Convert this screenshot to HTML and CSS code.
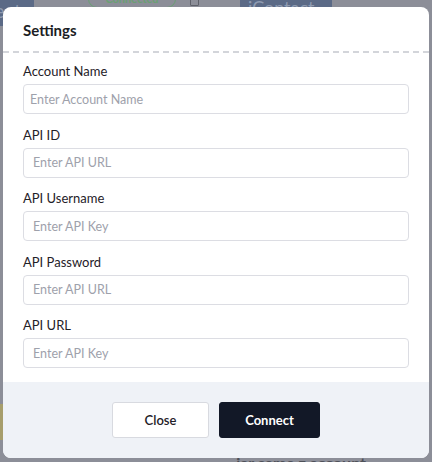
FILE: index.html
```html
<!DOCTYPE html>
<html>
<head>
<meta charset="utf-8">
<link rel="stylesheet" href="styles.css">
</head>
<body>
<div class="page">
  <div class="page-top">
    <div class="chip-blue left-chip">ect</div>
    <div class="pill">Connected</div>
    <div class="trash"></div>
    <div class="chip-blue contact-chip">iContact</div>
  </div>
  <div class="page-bottom">
    <div class="side-yellow"></div>
    <div class="bottom-text">jar sama z account</div>
  </div>
</div>

<div class="modal">
  <div class="modal-header">Settings</div>
  <div class="modal-body">
    <div class="field">
      <label class="label">Account Name</label>
      <input class="input input-tight" type="text" placeholder="Enter Account Name">
    </div>
    <div class="field">
      <label class="label">API ID</label>
      <input class="input" type="text" placeholder="Enter API URL">
    </div>
    <div class="field">
      <label class="label">API Username</label>
      <input class="input" type="text" placeholder="Enter API Key">
    </div>
    <div class="field">
      <label class="label">API Password</label>
      <input class="input" type="text" placeholder="Enter API URL">
    </div>
    <div class="field">
      <label class="label">API URL</label>
      <input class="input" type="text" placeholder="Enter API Key">
    </div>
  </div>
  <div class="modal-footer">
    <button class="btn btn-close">Close</button>
    <button class="btn btn-connect">Connect</button>
  </div>
</div>
</body>
</html>
```

FILE: styles.css
```css
html, body {
  margin: 0;
  padding: 0;
}
body {
  width: 432px;
  height: 462px;
  overflow: hidden;
  background: #8c8e98;
  font-family: Lato, "Noto Sans", sans-serif;
  position: relative;
}
.page {
  height: 462px;
  display: flex;
  flex-direction: column;
  justify-content: space-between;
}
.page-top {
  display: flex;
  align-items: flex-start;
  height: 26px;
}
.chip-blue {
  background: #5b6a86;
  color: #8e9ab0;
  font-size: 20px;
  line-height: 20px;
  overflow: hidden;
}
.left-chip {
  width: 34px;
  height: 26px;
  text-indent: -6px;
}
.pill {
  margin-left: 54px;
  margin-top: -10px;
  width: 86px;
  height: 16px;
  border: 1.5px solid #6aa073;
  border-radius: 12px;
  color: #6aa073;
  font-size: 11px;
  font-weight: 700;
  line-height: 16px;
  text-align: center;
}
.trash {
  margin-left: 14px;
  margin-top: -4px;
  width: 7px;
  height: 8px;
  border: 1.5px solid #5f616a;
  border-radius: 1px;
}
.contact-chip {
  margin-left: 41px;
  width: 92px;
  height: 10px;
  padding-left: 8px;
  box-sizing: border-box;
  font-size: 18px;
  line-height: 14px;
  color: #8f9bb1;
}
.page-bottom {
  display: flex;
  align-items: flex-end;
  justify-content: space-between;
  height: 60px;
}
.side-yellow {
  width: 4px;
  height: 36px;
  margin-bottom: 22px;
  background: #a79e6c;
}
.bottom-text {
  margin-right: 66px;
  margin-bottom: -10px;
  font-size: 16px;
  font-weight: 700;
  color: #4e5058;
}

.modal {
  position: absolute;
  left: 3px;
  top: 7px;
  width: 426px;
  height: 451px;
  background: #ffffff;
  border-radius: 8px;
  overflow: hidden;
  display: flex;
  flex-direction: column;
}
.modal-header {
  height: 42px;
  padding: 0 20px;
  display: flex;
  align-items: center;
  font-size: 15px;
  font-weight: 700;
  color: #1b1d24;
  border-bottom: 2px dashed #d3d5da;
  padding-top: 2px;
}
.modal-body {
  flex: 1;
  padding: 9px 20px 0;
  display: flex;
  flex-direction: column;
  gap: 11.5px;
}
.field {
  display: flex;
  flex-direction: column;
}
.label {
  font-size: 13px;
  line-height: 18px;
  color: #1f2128;
  margin-bottom: 4px;
}
.input {
  height: 30px;
  box-sizing: border-box;
  border: 1px solid #dcdde3;
  border-radius: 4px;
  padding: 0 9px;
  font-family: Lato, "Noto Sans", sans-serif;
  font-size: 12.5px;
  color: #1f2128;
  outline: none;
}
.input-tight {
  padding-left: 6px;
}
.input::placeholder {
  color: #9ea1ab;
}
.modal-footer {
  height: 76px;
  box-sizing: border-box;
  background: #eff2f7;
  display: flex;
  justify-content: center;
  align-items: center;
  gap: 10px;
}
.btn {
  height: 36px;
  border-radius: 3px;
  font-family: Lato, "Noto Sans", sans-serif;
  font-size: 13px;
  font-weight: 700;
  cursor: pointer;
}
.btn-close {
  width: 97px;
  background: #ffffff;
  border: 1px solid #d8dae0;
  color: #1f2128;
  font-weight: 600;
}
.btn-connect {
  width: 101px;
  background: #121827;
  border: 1px solid #121827;
  color: #ffffff;
}
```
